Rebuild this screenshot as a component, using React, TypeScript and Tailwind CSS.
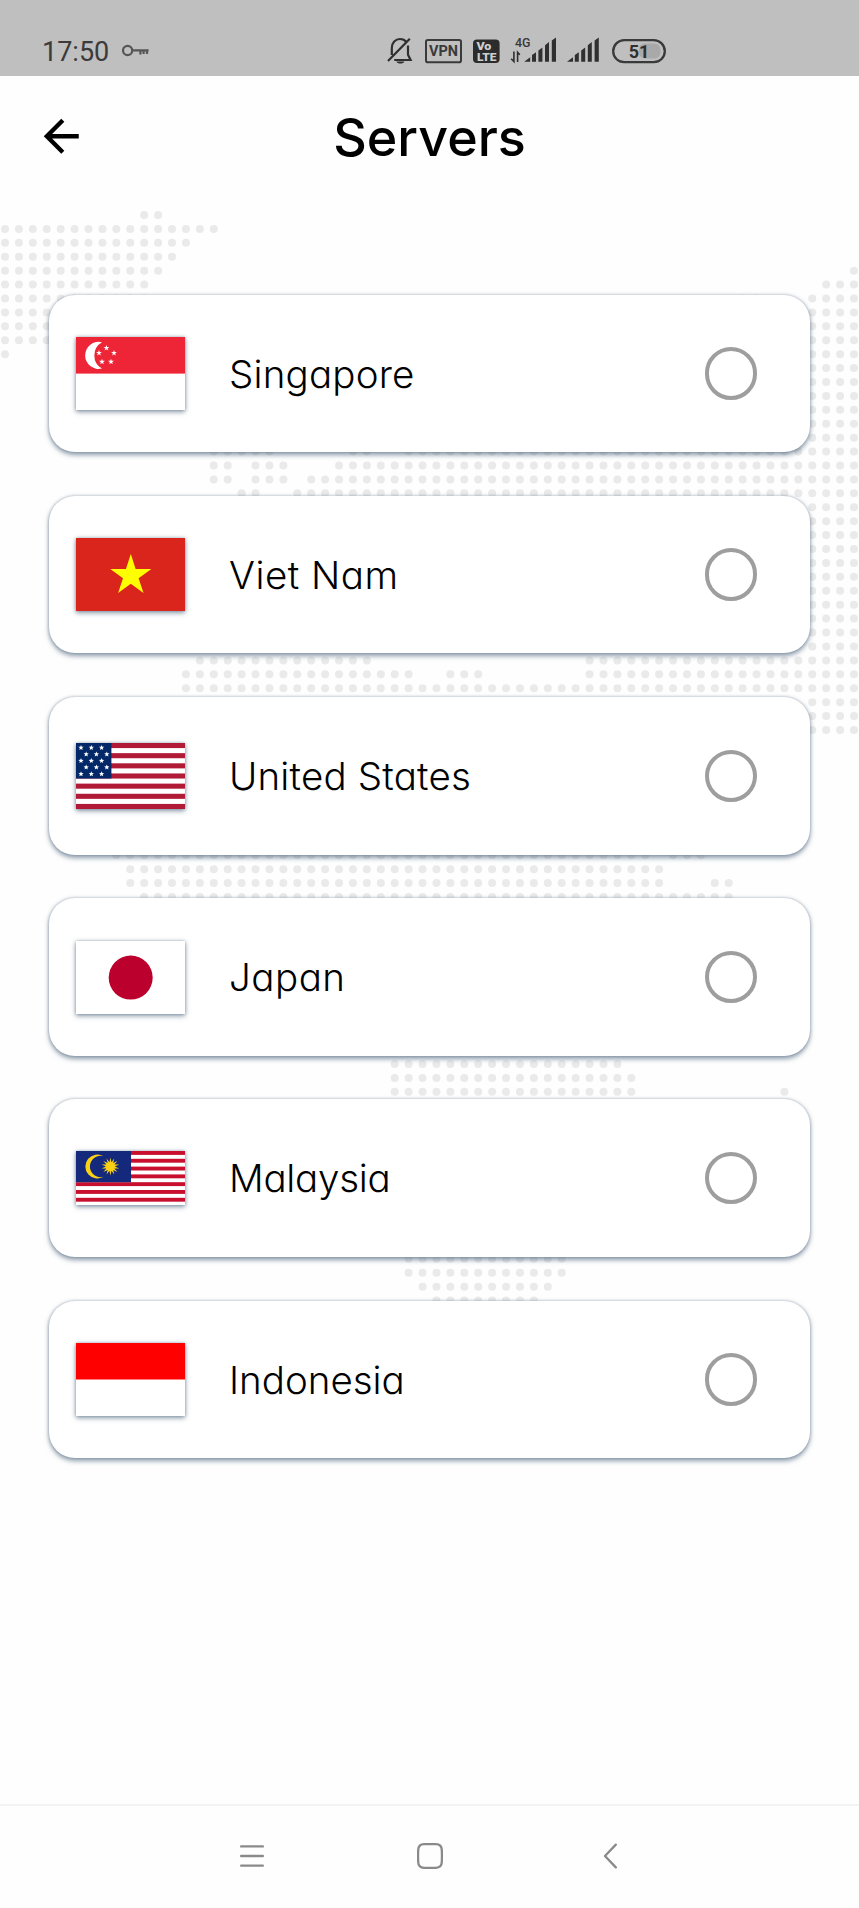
import type { ReactNode } from "react";

const PITCH = 13.918;

// Rows of the dotted world map: [row, [firstColumn, lastColumn], ...]
const MAP_ROWS: [number, ...[number, number][]][] = [
  [0, [10, 11]],
  [1, [0, 15]],
  [2, [0, 13]],
  [3, [0, 12]],
  [4, [0, 11], [61, 61]],
  [5, [0, 10], [59, 61]],
  [6, [0, 10], [53, 54], [58, 61]],
  [7, [0, 3], [58, 61]],
  [8, [0, 3], [58, 61]],
  [9, [0, 3], [58, 61]],
  [10, [0, 0], [58, 61]],
  [11, [58, 61]],
  [12, [58, 61]],
  [13, [58, 61]],
  [14, [58, 61]],
  [15, [58, 61]],
  [16, [58, 61]],
  [17, [15, 19], [25, 26], [29, 61]],
  [18, [15, 16], [18, 20], [24, 61]],
  [19, [15, 16], [18, 20], [22, 61]],
  [20, [17, 18], [21, 61]],
  [21, [58, 61]],
  [22, [58, 61]],
  [23, [58, 61]],
  [24, [58, 61]],
  [25, [58, 61]],
  [26, [58, 61]],
  [27, [58, 61]],
  [28, [58, 61]],
  [29, [58, 61]],
  [30, [58, 61]],
  [31, [58, 61]],
  [32, [14, 26], [42, 61]],
  [33, [13, 29], [32, 34], [42, 61]],
  [34, [13, 61]],
  [35, [58, 61]],
  [36, [58, 61]],
  [37, [58, 61]],
  [46, [8, 46], [48, 50]],
  [47, [9, 47]],
  [48, [9, 47], [51, 52]],
  [49, [10, 52]],
  [61, [28, 44]],
  [62, [28, 45]],
  [63, [28, 45], [56, 56]],
  [75, [29, 40]],
  [76, [29, 40]],
  [77, [30, 39]],
  [78, [31, 38]],
];

function DottedMap() {
  const dots: ReactNode[] = [];
  MAP_ROWS.forEach(([row, ...spans]) =>
    (spans as [number, number][]).forEach(([from, to]) => {
      for (let col = from; col <= to; col++) {
        dots.push(
          <circle key={`${row}-${col}`} cx={5 + col * PITCH} cy={215 + row * PITCH} r="4" />
        );
      }
    })
  );
  return (
    <svg className="pointer-events-none absolute inset-0" width="859" height="1908" viewBox="0 0 859 1908" fill="#eaeaea" aria-hidden="true">
      {dots}
    </svg>
  );
}

function star(cx: number, cy: number, outer: number, inner: number, tips = 5) {
  return Array.from({ length: tips * 2 }, (_, i) => {
    const r = i % 2 ? inner : outer;
    const a = (Math.PI * i) / tips - Math.PI / 2;
    return `${(cx + r * Math.cos(a)).toFixed(2)},${(cy + r * Math.sin(a)).toFixed(2)}`;
  }).join(" ");
}

function Flag({ height, children }: { height: number; children: ReactNode }) {
  return (
    <svg
      className="block w-[109.3px] shrink-0 bg-white shadow-[0_2px_5px_rgba(70,95,120,0.6),0_0_3px_rgba(70,95,120,0.4)]"
      viewBox={`0 0 109.3 ${height}`}
      style={{ height }}
    >
      {children}
    </svg>
  );
}

function Stripes({ count, height, color }: { count: number; height: number; color: string }) {
  const h = height / count;
  return (
    <>
      {Array.from({ length: Math.ceil(count / 2) }, (_, i) => (
        <rect key={i} y={i * 2 * h} width="109.3" height={h} fill={color} />
      ))}
    </>
  );
}

const SG_STARS: [number, number][] = [[30.5, 11], [23, 16], [38, 16], [26, 24.8], [35, 24.8]];

const US_STARS: [number, number][] = [
  [5, 4.7], [15.3, 4.7], [25.6, 4.7],
  [10.2, 11.2], [20.4, 11.2], [30.8, 11.2],
  [5, 17.8], [15.3, 17.8], [25.6, 17.8],
  [10.2, 24.3], [20.4, 24.3], [30.8, 24.3],
  [5, 31], [15.3, 31], [25.6, 31],
];

const SERVERS: { name: string; text: string; flag: ReactNode }[] = [
  {
    name: "Singapore",
    text: "tracking-[0.2px]",
    flag: (
      <Flag height={73}>
        <rect width="109.3" height="36.6" fill="#ee2536" />
        <path d="M26 5.2A13.6 13.6 0 1 0 26 31.6A15.2 15.2 0 0 1 26 5.2Z" fill="#fff" />
        {SG_STARS.map(([x, y]) => (
          <polygon key={`${x}-${y}`} points={star(x, y, 3.1, 1.2)} fill="#fff" />
        ))}
      </Flag>
    ),
  },
  {
    name: "Viet Nam",
    text: "tracking-[0.5px]",
    flag: (
      <Flag height={73}>
        <rect width="109.3" height="73" fill="#da251d" />
        <polygon points={star(54.8, 37.6, 21.6, 8.2)} fill="#ff0" />
      </Flag>
    ),
  },
  {
    name: "United States",
    text: "tracking-[0.2px]",
    flag: (
      <Flag height={66}>
        <Stripes count={13} height={66} color="#b01a36" />
        <rect width="35.4" height="35.5" fill="#022868" />
        {US_STARS.map(([x, y]) => (
          <polygon key={`${x}-${y}`} points={star(x, y, 2.8, 1.2)} fill="#fff" />
        ))}
      </Flag>
    ),
  },
  {
    name: "Japan",
    text: "tracking-[0.5px]",
    flag: (
      <Flag height={73}>
        <circle cx="54.7" cy="36.6" r="22" fill="#bc002d" />
      </Flag>
    ),
  },
  {
    name: "Malaysia",
    text: "tracking-[-0.25px]",
    flag: (
      <Flag height={54.6}>
        <Stripes count={14} height={54.6} color="#c8102e" />
        <rect width="55" height="31.2" fill="#14297b" />
        <path d="M27.5 5.2A12 12 0 1 0 27.5 25.8A10.7 10.7 0 1 1 27.5 5.2Z" fill="#fbd116" />
        <polygon points={star(34.4, 15.5, 9, 4.4, 14)} fill="#fbd116" />
      </Flag>
    ),
  },
  {
    name: "Indonesia",
    text: "tracking-[0px]",
    flag: (
      <Flag height={73}>
        <rect width="109.3" height="36.5" fill="#f00" />
      </Flag>
    ),
  },
];

function Signal() {
  return (
    <>
      <path d="M0 27L6 22.5V27Z" />
      <path d="M7.8 27V20.2L11.8 17.5V27Z" />
      <path d="M14.2 27V15.6L18.2 12.6V27Z" />
      <path d="M20.8 27V10.4L24.8 7.3V27Z" />
      <path d="M27.6 27V5.6L31.8 2.8V27Z" />
    </>
  );
}

function StatusBar() {
  return (
    <header className="flex h-[75.5px] items-start bg-[#bfbfbf] pl-[42px] pt-9 text-[#333]">
      <span className="w-[80px] font-['Roboto',sans-serif] text-[27px] leading-[32px] text-[#3b3b3b]">17:50</span>
      <svg width="28" height="28" viewBox="0 0 28 28" fill="none" stroke="#555" strokeWidth="2.2">
        <circle cx="5.6" cy="14.5" r="4.6" />
        <path d="M10.2 14.3H26.6M18.4 14.5V18.6M21.6 14.5V18M25 14.5V18" />
      </svg>
      <svg className="ml-[237px]" width="26" height="28" viewBox="0 0 26 28" fill="none" stroke="#2f2f2f" strokeWidth="2.2">
        <path d="M4.8 19V12C4.8 6.5 8.5 3 13 3C15.8 3 18 4.1 19.4 6M21 9.6V18.8L23.6 24H7.2M1 25L22.8 2.8" />
        <path d="M9.4 25.4H17.4C16.5 28.1 10.3 28.1 9.4 25.4Z" fill="#2f2f2f" stroke="none" />
      </svg>
      <svg className="ml-[12px]" width="37" height="28" viewBox="0 0 37 28">
        <rect x="1" y="4" width="35" height="22.2" rx="1.8" fill="none" stroke="#3a3a3a" strokeWidth="2" />
        <text x="18.5" y="20.4" textAnchor="middle" textLength="29" lengthAdjust="spacingAndGlyphs" fill="#3a3a3a" className="font-['Roboto',sans-serif] text-[15px] font-bold">VPN</text>
      </svg>
      <svg className="ml-[11px]" width="27" height="28" viewBox="0 0 27 28">
        <rect y="3.4" width="26.6" height="23.6" rx="4" fill="#2c2c2c" />
        <g fill="#cfcfcf" className="font-['Roboto',sans-serif] text-[11.5px] font-black">
          <text x="3.4" y="13.8" textLength="15" lengthAdjust="spacingAndGlyphs">Vo</text>
          <text x="4" y="24.6" textLength="19.5" lengthAdjust="spacingAndGlyphs">LTE</text>
        </g>
      </svg>
      <svg className="ml-[10px] overflow-visible" width="47" height="28" viewBox="0 0 47 28" fill="#2f2f2f">
        <text x="5" y="11" textLength="15.5" lengthAdjust="spacingAndGlyphs" fill="#3a3a3a" className="font-['Roboto',sans-serif] text-[12.5px] font-medium">4G</text>
        <path d="M3.9 15.5V25.5L1.2 22.8M7.6 26V16.4L9.8 18.8" fill="none" stroke="#2f2f2f" strokeWidth="1.6" />
        <g transform="translate(14.2 -1.2)"><Signal /></g>
      </svg>
      <svg className="ml-[10px]" width="33" height="28" viewBox="0 0 33 28" fill="#2f2f2f">
        <g transform="translate(0 -1.2)"><Signal /></g>
      </svg>
      <svg className="ml-[12px]" width="54" height="28" viewBox="0 0 54 28">
        <rect x="27" y="7.5" width="21.5" height="15" rx="6" fill="#a9a9a9" />
        <rect x="1.2" y="4.2" width="51.6" height="22" rx="11" fill="none" stroke="#3a3a3a" strokeWidth="2.3" />
        <text x="27" y="21.6" textAnchor="middle" fill="#2f2f2f" className="font-['Roboto',sans-serif] text-[18px] font-bold">51</text>
      </svg>
    </header>
  );
}

function ServerCard({ name, text, flag }: { name: string; text: string; flag: ReactNode }) {
  return (
    <li className="flex h-[157.5px] items-center rounded-[26px] bg-white pl-[26.7px] pr-[53px] shadow-[0_2.5px_5px_rgba(75,98,122,0.62),0_0_3px_rgba(75,98,122,0.38)]">
      {flag}
      <span className={`ml-[44px] flex-1 whitespace-nowrap pt-[1px] text-[38.5px] font-light leading-none text-black ${text}`}>{name}</span>
      <span className="size-[52.5px] rounded-full border-[4.6px] border-[#9e9e9e]" />
    </li>
  );
}

export default function App() {
  return (
    <div className="relative flex h-[1908px] w-[859px] flex-col overflow-hidden bg-[#fefefe] font-['Inter','Lato',sans-serif] [font-feature-settings:'cv11','ss03']">
      <DottedMap />
      <StatusBar />
      <div className="relative grid h-[122px] grid-cols-[1fr_auto_1fr] items-center">
        <svg className="ml-[35.3px] size-[52.5px]" viewBox="0 0 24 24" fill="#000">
          <path d="M20 11H7.83l5.59-5.59L12 4l-8 8 8 8 1.41-1.41L7.83 13H20v-2z" />
        </svg>
        <h1 className="pt-[3px] text-[52px] font-medium leading-none text-black">Servers</h1>
      </div>
      <ul className="relative mt-[97.2px] flex flex-1 flex-col gap-[43.7px] pl-[49px] pr-[49px]">
        {SERVERS.map((s) => (
          <ServerCard key={s.name} {...s} />
        ))}
      </ul>
      <nav className="relative flex h-[104px] items-center border-t-2 border-[#f3f3f3] bg-[#fefefe] pb-[1.5px] pl-[240px]">
        <svg width="24" height="26" viewBox="0 0 24 26" fill="none" stroke="#8a8a8a" strokeWidth="2.4" strokeLinecap="round">
          <path d="M1.2 3.4H22.8M1.2 13H22.8M1.2 22.6H22.8" />
        </svg>
        <svg className="ml-[152.5px]" width="26" height="26" viewBox="0 0 26 26" fill="none" stroke="#8a8a8a" strokeWidth="2.3">
          <path d="M7 1.2Q13 .9 19 1.2Q24.6 1.4 24.8 7Q25.1 13 24.8 19Q24.6 24.6 19 24.8Q13 25.1 7 24.8Q1.4 24.6 1.2 19Q.9 13 1.2 7Q1.4 1.4 7 1.2Z" />
        </svg>
        <svg className="ml-[160px]" width="15" height="26" viewBox="0 0 15 26" fill="none" stroke="#8a8a8a" strokeWidth="2.3" strokeLinecap="round" strokeLinejoin="round">
          <path d="M12.8 1.6L2 13L12.8 24.4" />
        </svg>
      </nav>
    </div>
  );
}
